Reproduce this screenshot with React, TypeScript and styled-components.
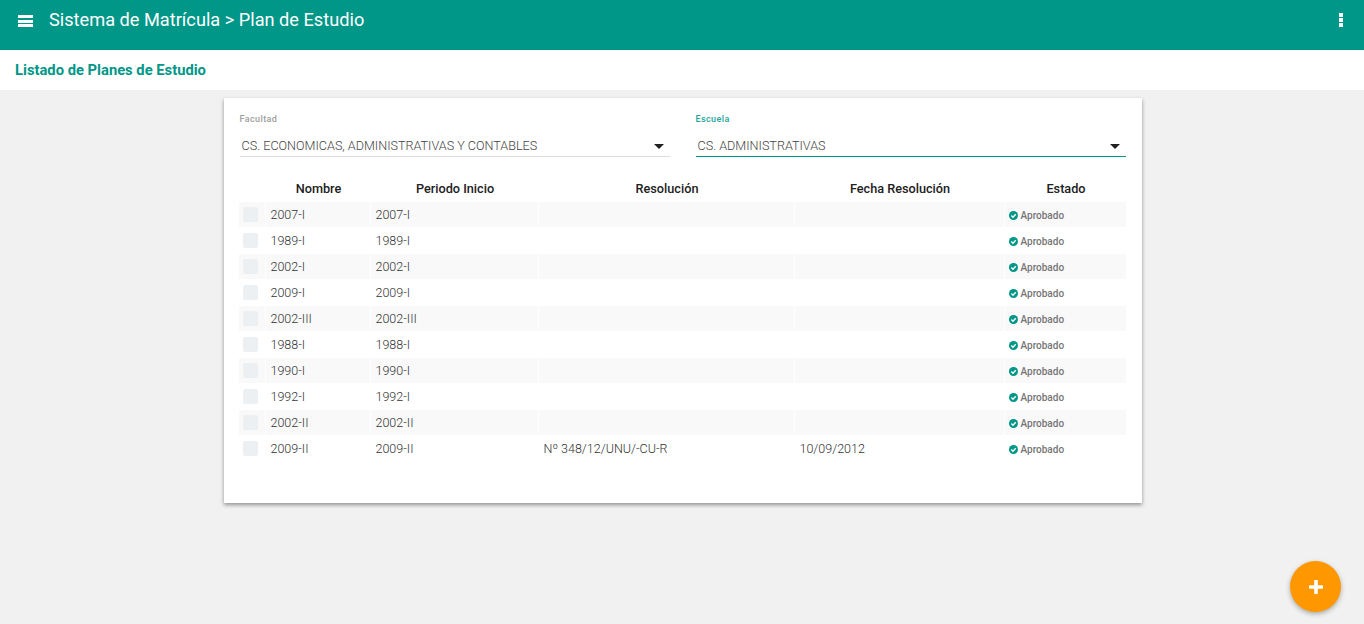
import React from "react";
import styled, { createGlobalStyle } from "styled-components";

const Global = createGlobalStyle`
  html, body { margin: 0; padding: 0; height: 100%; }
  body { background: #f1f1f1; font-family: Roboto, "Liberation Sans", sans-serif; overflow: hidden; }
  #root { height: 100%; }
`;

const Page = styled.div`
  position: relative;
  height: 624px;
  display: flex;
  flex-direction: column;
`;

const TopBar = styled.header`
  height: 50px;
  background: #009688;
  color: #fff;
  display: flex;
  align-items: flex-start;
  flex-shrink: 0;
`;

const MenuButton = styled.div`
  width: 15px;
  height: 12px;
  margin: 15px 16px 0 18px;
  display: flex;
  flex-direction: column;
  justify-content: space-between;
`;

const MenuLine = styled.span`
  display: block;
  height: 3px;
  background: #fff;
`;

const Title = styled.h1`
  margin: 8px 0 0;
  font-size: 18.2px;
  line-height: 24px;
  font-weight: 400;
  flex: 1;
`;

const MoreButton = styled.div`
  width: 4px;
  margin: 13px 21px 0 0;
  display: flex;
  flex-direction: column;
  gap: 1px;
`;

const MoreDot = styled.span`
  display: block;
  width: 4px;
  height: 4px;
  background: #fff;
`;

const SubBar = styled.div`
  height: 40px;
  background: #fff;
  padding-left: 15px;
  font-size: 14.75px;
  font-weight: 700;
  line-height: 40px;
  color: #009688;
  flex-shrink: 0;
`;

const Content = styled.main`
  display: flex;
  justify-content: center;
  padding: 8px 0 0 1px;
`;

const Card = styled.section`
  box-sizing: border-box;
  width: 918px;
  height: 405px;
  background: #fff;
  box-shadow: 0 2px 4px rgba(0, 0, 0, 0.4);
  padding: 15px 16px 0 15px;
`;

const Filters = styled.div`
  display: grid;
  grid-template-columns: 430px 430px;
  column-gap: 26px;
  margin-left: 1px;
`;

const Field = styled.div`
  display: flex;
  flex-direction: column;
`;

const FieldLabel = styled.label<{ $active?: boolean }>`
  font-size: 9px;
  font-weight: 500;
  letter-spacing: 0.4px;
  line-height: 12px;
  color: ${(p) => (p.$active ? "#26a69a" : "#9e9e9e")};
`;

const SelectBox = styled.div<{ $active?: boolean }>`
  box-sizing: border-box;
  height: 25px;
  margin-top: 7px;
  padding: 6px 6px 0 2px;
  display: flex;
  justify-content: space-between;
  align-items: flex-start;
  font-size: 12.6px;
  line-height: 16px;
  font-weight: 300;
  color: #444;
  border-bottom: 1px solid ${(p) => (p.$active ? "#009688" : "#ddd")};
`;

const Caret = styled.span`
  width: 0;
  height: 0;
  margin-top: 6px;
  border-left: 5px solid transparent;
  border-right: 5px solid transparent;
  border-top: 5px solid #222;
`;

const Table = styled.div`
  display: grid;
  grid-template-columns: 26px 104px 167px 255px 209px 121px;
  column-gap: 1px;
  margin-top: 19px;
`;

const HeadCell = styled.div`
  height: 26px;
  padding-left: 2px;
  font-size: 12.7px;
  font-weight: 500;
  line-height: 26px;
  text-align: center;
  color: #212121;
`;

const Cell = styled.div<{ $striped: boolean }>`
  box-sizing: border-box;
  height: 25px;
  margin-bottom: 1px;
  padding-left: 5px;
  font-size: 12.5px;
  font-weight: 300;
  line-height: 25px;
  color: #333;
  white-space: nowrap;
  background: ${(p) => (p.$striped ? "#f9f9f9" : "#fff")};
`;

const CheckCell = styled(Cell)`
  padding: 5px 0 0 4px;
`;

const CheckBox = styled.span`
  display: block;
  width: 15px;
  height: 15px;
  border-radius: 2px;
  background: #ecf0f3;
`;

const StatusCell = styled(Cell)`
  display: flex;
  align-items: center;
  gap: 3px;
  padding: 1px 0 0 4px;
  font-size: 10px;
  font-weight: 500;
  color: #757575;
`;

const Fab = styled.button`
  position: absolute;
  right: 23px;
  bottom: 12px;
  width: 51px;
  height: 51px;
  border: none;
  padding: 0;
  border-radius: 50%;
  background: #ff9800;
  box-shadow: 0 2px 5px rgba(0, 0, 0, 0.3);
  display: flex;
  align-items: center;
  justify-content: center;
`;

const Check = () => (
  <svg width="9" height="9" viewBox="0 0 10 10" aria-hidden="true">
    <circle cx="5" cy="5" r="5" fill="#009688" />
    <path d="M2.6 5.1 4.4 6.9 7.5 3.6" fill="none" stroke="#fff" strokeWidth="1.5" />
  </svg>
);

const Plus = () => (
  <svg width="14" height="14" viewBox="0 0 14 14" aria-hidden="true">
    <path d="M7 1v12M1 7h12" stroke="#fff" strokeWidth="3.6" strokeLinecap="round" />
  </svg>
);

const rows = [
  ["2007-I", "", ""],
  ["1989-I", "", ""],
  ["2002-I", "", ""],
  ["2009-I", "", ""],
  ["2002-III", "", ""],
  ["1988-I", "", ""],
  ["1990-I", "", ""],
  ["1992-I", "", ""],
  ["2002-II", "", ""],
  ["2009-II", "Nº 348/12/UNU/-CU-R", "10/09/2012"],
];

const heads = ["", "Nombre", "Periodo Inicio", "Resolución", "Fecha Resolución", "Estado"];

export default function App() {
  return (
    <Page>
      <Global />
      <TopBar>
        <MenuButton>
          <MenuLine />
          <MenuLine />
          <MenuLine />
        </MenuButton>
        <Title>Sistema de Matrícula &gt; Plan de Estudio</Title>
        <MoreButton>
          <MoreDot />
          <MoreDot />
          <MoreDot />
        </MoreButton>
      </TopBar>
      <SubBar>Listado de Planes de Estudio</SubBar>
      <Content>
        <Card>
          <Filters>
            <Field>
              <FieldLabel>Facultad</FieldLabel>
              <SelectBox>
                <span>CS. ECONOMICAS, ADMINISTRATIVAS Y CONTABLES</span>
                <Caret />
              </SelectBox>
            </Field>
            <Field>
              <FieldLabel $active>Escuela</FieldLabel>
              <SelectBox $active>
                <span>CS. ADMINISTRATIVAS</span>
                <Caret />
              </SelectBox>
            </Field>
          </Filters>
          <Table>
            {heads.map((h) => (
              <HeadCell key={h || "check"}>{h}</HeadCell>
            ))}
            {rows.map(([name, res, date], i) => {
              const striped = i % 2 === 0;
              return (
                <React.Fragment key={name}>
                  <CheckCell $striped={striped}>
                    <CheckBox />
                  </CheckCell>
                  <Cell $striped={striped}>{name}</Cell>
                  <Cell $striped={striped}>{name}</Cell>
                  <Cell $striped={striped}>{res}</Cell>
                  <Cell $striped={striped}>{date}</Cell>
                  <StatusCell $striped={striped}>
                    <Check />
                    Aprobado
                  </StatusCell>
                </React.Fragment>
              );
            })}
          </Table>
        </Card>
      </Content>
      <Fab aria-label="Agregar">
        <Plus />
      </Fab>
    </Page>
  );
}
